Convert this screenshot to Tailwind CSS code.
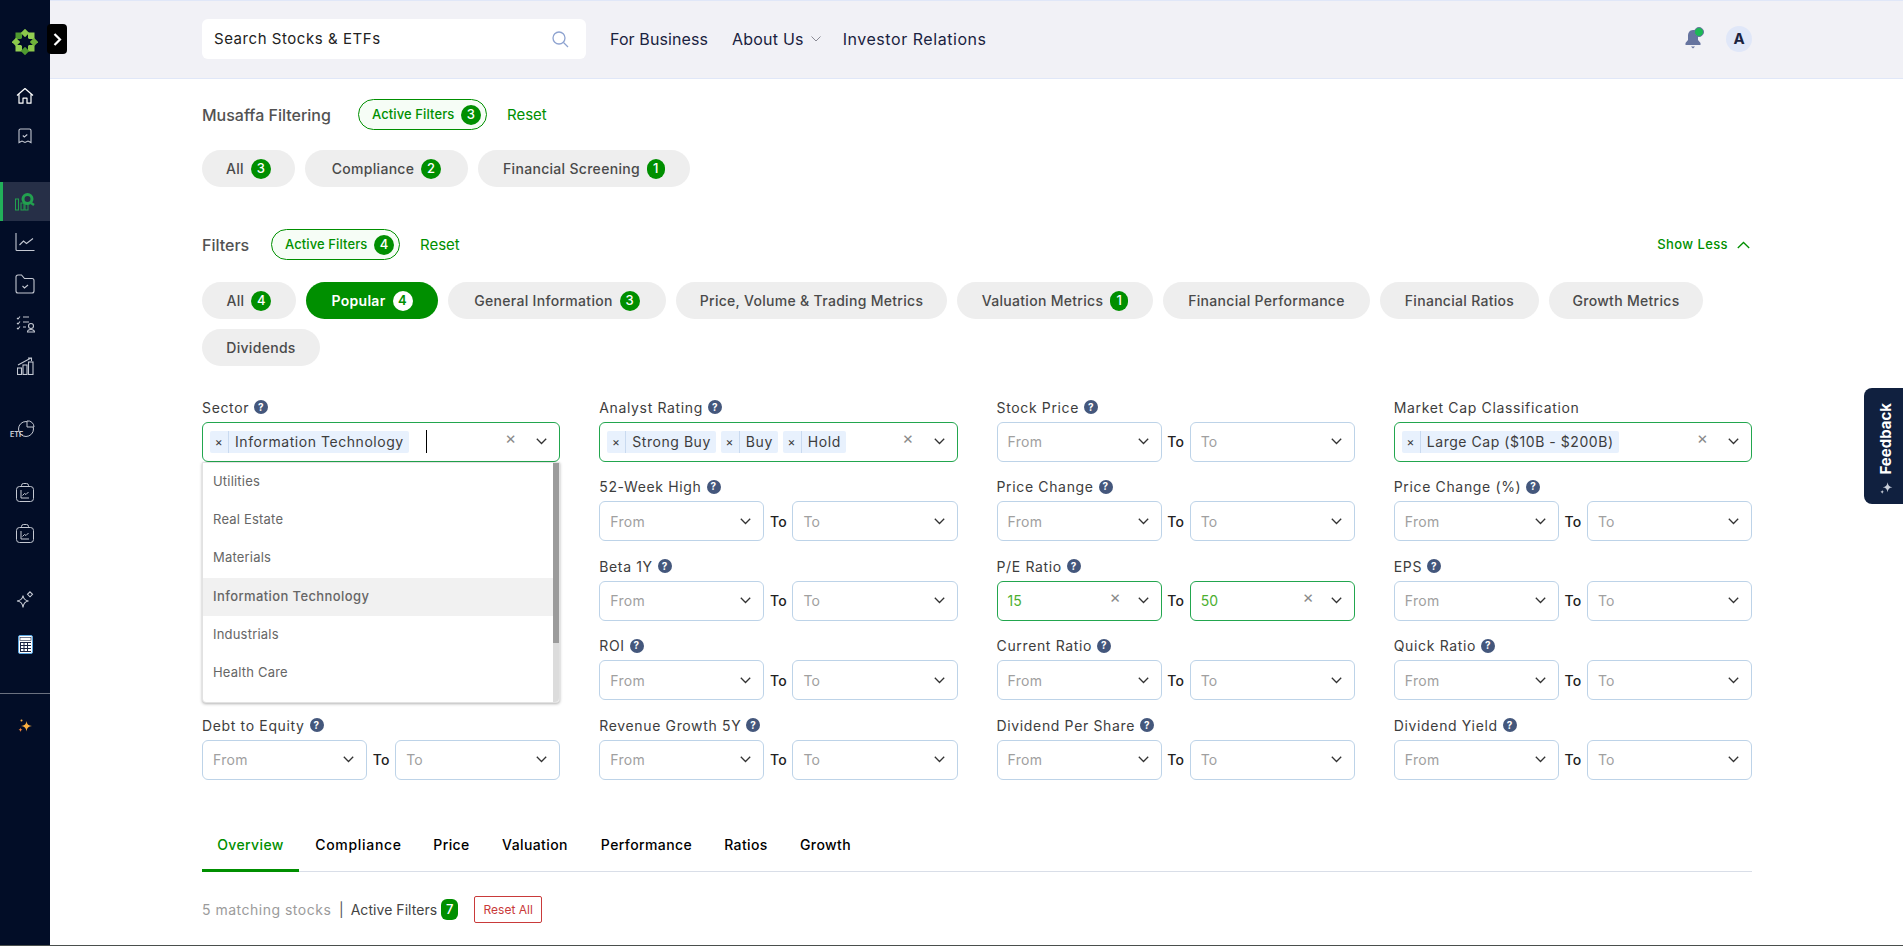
<!DOCTYPE html>
<html lang="en">
  <head>
    <meta charset="UTF-8" />
    <title>Stock Screener</title>
    <script src="https://cdn.jsdelivr.net/npm/@tailwindcss/browser@4"></script>
  </head>
  <body class="[font-family:Inter,sans-serif] bg-white h-[946px] overflow-hidden relative">
    <div class="flex h-[946px]">
      <!-- sidebar -->
      <aside class="w-[50px] shrink-0 bg-[#020d27] relative flex flex-col items-center text-[#c4c8d2]">
        <div class="h-[82px] pt-[1px] flex items-center justify-center w-full">
          <svg width="26" height="26" viewBox="0 0 26 26">
            <g fill="#7dbb3c">
              <rect x="3.500" y="3.500" width="6.500" height="6.500" fill="#4f9a2f" />
              <rect x="16" y="3.500" width="6.500" height="6.500" fill="#93cf52" />
              <rect x="3.500" y="16" width="6.500" height="6.500" fill="#93cf52" />
              <rect x="16" y="16" width="6.500" height="6.500" fill="#8cc84b" />
            </g>
            <g fill="#8cc84b">
              <rect x="10" y="1" width="6" height="6" transform="rotate(45 13 4)" />
              <rect x="10" y="19" width="6" height="6" transform="rotate(45 13 22)" fill="#4f9a2f" />
              <rect x="1" y="10" width="6" height="6" transform="rotate(45 4 13)" />
              <rect x="19" y="10" width="6" height="6" transform="rotate(45 22 13)" fill="#6fb23a" />
            </g>
            <circle cx="13" cy="13" r="5" fill="#020d27" />
          </svg>
        </div>
        <div class="h-[28px] flex items-center text-white">
          <svg width="18" height="18" viewBox="0 0 18 18" fill="none" stroke="currentColor" stroke-width="1.2"><path d="M1 8.500 9 1.500l8 7M3 7v9.200h4v-5h4v5h4V7" stroke-linejoin="round" /></svg>
        </div>
        <div class="h-[28px] mt-[12px] flex items-center">
          <svg width="14" height="16" viewBox="0 0 14 16" fill="none" stroke="currentColor" stroke-width="1.1"><path d="M2.500 1h9A1.500 1.500 0 0 1 13 2.500V14.500l-3-1.500-3 1.500L4 13l-3 1.500V2.500A1.500 1.500 0 0 1 2.500 1ZM4.800 7.500l1.500 1.500 3-2.500" /></svg>
        </div>
        <div class="mt-[32px] h-[39px] w-full bg-[#262f47] border-l-[3px] border-[#22b05a] flex items-center justify-center pr-[3px] text-[#22a04f]">
          <svg width="20" height="18" viewBox="0 0 20 18" fill="none" stroke="currentColor"><rect x="0.500" y="6" width="3" height="11" /><rect x="6" y="10" width="3" height="7" /><rect x="10" y="11" width="3" height="6" /><circle cx="12.500" cy="6" r="4.500" stroke-width="3" /><path d="m16 10 3 2" stroke-width="2.500" /></svg>
        </div>
        <div class="mt-[1px] h-[40px] flex items-center">
          <svg width="20" height="20" viewBox="0 0 20 20" fill="none" stroke="currentColor" stroke-width="1.100"><path d="M1 1v16.500a1 1 0 0 0 1 1h17.500" /><path d="m4.500 13 4-4 3 2.500L18 6.500" /></svg>
        </div>
        <div class="mt-[2px] h-[40px] flex items-center">
          <svg width="20" height="20" viewBox="0 0 20 20" fill="none" stroke="currentColor" stroke-width="1.100"><path d="M1 3a2 2 0 0 1 2-2h3.500l3 3.500H17a2 2 0 0 1 2 2V17a2 2 0 0 1-2 2H3a2 2 0 0 1-2-2ZM7.500 12l2 2 3.500-3" /></svg>
        </div>
        <div class="h-[40px] flex items-center">
          <svg width="19" height="18" viewBox="0 0 19 18" fill="none" stroke="currentColor" stroke-width="1.100"><path d="m1 3 1 1 2-2.500M1 8l1 1 2-2.500M1 13l1 1 2-2.500M7 2h6M7 7h6M7 12h3" /><circle cx="15" cy="11" r="2.500" /><path d="M11.500 17a3.500 2.500 0 0 1 7 0Z" /></svg>
        </div>
        <div class="mt-[2px] h-[40px] flex items-center">
          <svg width="17" height="18" viewBox="0 0 17 18" fill="none" stroke="currentColor" stroke-width="1.100"><rect x="0.500" y="11" width="4" height="6.500" /><rect x="6" y="8" width="4" height="9.500" /><rect x="11.500" y="5" width="4.500" height="12.500" /><path d="M1 8 14 1M11 1h3.500v3" /></svg>
        </div>
        <div class="mt-[22px] h-[40px] flex items-center relative">
          <svg width="20" height="17" viewBox="0 0 20 17" fill="none" stroke="currentColor" stroke-width="1"><circle cx="11" cy="9" r="7.500" /><path d="M12 1a6 6 0 0 1 7 6h-7Z" fill="#020d27" /></svg>
          <span class="absolute left-[-5px] bottom-[10px] text-[7px] font-bold leading-none">ETF</span>
        </div>
        <div class="mt-[24px] h-[40px] flex items-center">
          <svg width="18" height="19" viewBox="0 0 18 19" fill="none" stroke="currentColor" stroke-width="1"><rect x="0.500" y="3.500" width="17" height="15" rx="3" /><path d="M5.500 3.500V2.500a2 2 0 0 1 2-2h3a2 2 0 0 1 2 2v1M5 7v8h8M6.500 12.500l2-2 1.500 1 2.500-2.500" /></svg>
        </div>
        <div class="mt-[1px] h-[40px] flex items-center">
          <svg width="18" height="19" viewBox="0 0 18 19" fill="none" stroke="currentColor" stroke-width="1"><rect x="0.500" y="3.500" width="17" height="15" rx="3" /><path d="M5.500 3.500V2.500a2 2 0 0 1 2-2h3a2 2 0 0 1 2 2v1M5 7v8h8M6.500 12.500l2-2 1.500 1 2.500-2.500" /></svg>
        </div>
        <div class="mt-[27px] h-[40px] flex items-center">
          <svg width="18" height="18" viewBox="0 0 18 18" fill="none" stroke="currentColor" stroke-width="1.100"><path d="M7 4.500C7.500 8 9 9.500 12.500 10 9 10.500 7.500 12 7 16.500 6.500 12 5 10.500 1 10 5 9.500 6.500 8 7 4.500Z" /><path d="m14 .8 2.500 2.500L14 5.800l-2.500-2.500Z" /></svg>
        </div>
        <div class="mt-[4px] h-[40px] flex items-center">
          <svg width="15" height="19" viewBox="0 0 15 19"><rect x="0.500" y="0.500" width="14" height="18" rx="1.500" fill="#fff" stroke="#5aa6e0" /><rect x="2" y="2.500" width="11" height="3" fill="#fff" stroke="#1a2240" stroke-width=".6" /><g fill="#1a2240"><rect x="2" y="7" width="11" height="1" /><rect x="2" y="10" width="11" height="1" /><rect x="2" y="13" width="11" height="1" /><rect x="2" y="16" width="11" height="1" /><rect x="2" y="7" width="1" height="10" /><rect x="5.500" y="7" width="1" height="10" /><rect x="9" y="7" width="1" height="10" /></g></svg>
        </div>
        <div class="mt-[29px] w-full h-[1px] bg-[#6b7180]"></div>
        <div class="mt-[12px] h-[40px] flex items-center">
          <svg width="15" height="14" viewBox="0 0 15 14"><path d="M8.500 2C9 5.500 10.500 6.500 14 7 10.500 7.500 9 8.500 8.500 12.500 8 8.500 6.500 7.500 3 7 6.500 6.500 8 5.500 8.500 2Z" fill="#fbb040" /><path d="M2.500 8.500C2.700 10 3.200 10.500 4.500 10.700 3.200 11 2.700 11.500 2.500 13.200 2.300 11.500 1.800 11 .5 10.700 1.800 10.500 2.300 10 2.500 8.500Z" fill="#f0803c" /><circle cx="3.500" cy="1.500" r="1" fill="#fbb040" /></svg>
        </div>
        <button class="absolute left-[47px] top-[24px] w-[20px] h-[30px] bg-black rounded-[4px] flex items-center justify-center text-white z-20">
          <svg width="9" height="13" viewBox="0 0 9 13" fill="none" stroke="currentColor" stroke-width="2.200"><path d="m1.500 1 5.500 5.500L1.500 12" /></svg>
        </button>
      </aside>

      <div class="flex-1 min-w-0">
        <!-- top bar -->
        <header class="h-[79px] bg-[#f1f1f6] border-y border-[#e0e7f8] pl-[152px] pr-[150px] pb-[1px] flex items-center text-[#1a2240]">
          <div class="w-[384px] h-[40px] bg-white rounded-[6px] pl-3 pr-[17px] flex items-center justify-between text-[15px] tracking-[0.55px] text-[#222]">
            Search Stocks &amp; ETFs
            <svg width="17" height="17" viewBox="0 0 17 17" fill="none" stroke="#8ea3d0" stroke-width="1.300"><circle cx="7" cy="7" r="6" /><path d="m11.500 11.500 4.500 4.500" /></svg>
          </div>
          <a class="ml-6 text-[16px] tracking-[0.1px]">For Business</a>
          <a class="ml-6 text-[16px] tracking-[0.2px]">About Us</a>
          <svg class="ml-[7px]" width="10" height="6" viewBox="0 0 10 6" fill="none" stroke="#8a8a94"><path d="m.5.500 4.500 4.500L9.500.500" /></svg>
          <a class="ml-[22px] text-[16px] tracking-[0.55px]">Investor Relations</a>
          <div class="ml-auto flex items-center mr-[1px]">
            <div class="relative w-[18px] h-[22px] mr-[24px]">
              <svg width="18" height="22" viewBox="0 0 18 22" fill="#66749f"><path d="M9 2c-3.500 0-5 3-5 6v4l-2.500 3v2h15v-2L14 12V8c0-3.500-1.500-6-5-6ZM7 18.500h4L9 20.500Z" /></svg>
              <span class="absolute right-[-2px] top-[-1px] w-[8px] h-[8px] rounded-full bg-[#1cb955] border border-[#66749f] box-content"></span>
            </div>
            <div class="w-[26px] h-[26px] rounded-full bg-[#e0e7f8] flex items-center justify-center text-[15px] font-bold">A</div>
          </div>
        </header>

        <main class="pl-[152px] pr-[151px]">
          <div class="flex items-center mt-5 h-[31px]">
            <h2 class="w-[135px] whitespace-nowrap text-[16px] font-medium text-[#525252]">Musaffa Filtering</h2>
            <div class="ml-[21px] w-[129px] h-[31px] rounded-full border border-[#008f00] bg-[#f6fdf6] pl-[13px] pr-[5px] flex items-center justify-between text-[13px] tracking-[0.1px] font-medium text-[#008f00]">
              Active Filters
              <span class="w-[20px] h-[20px] rounded-full bg-[#008f00] text-white text-[13px] flex items-center justify-center">3</span>
            </div>
            <button class="ml-5 mt-[1px] text-[15px] text-[#008f00]">Reset</button>
          </div>

          <div class="flex gap-[10px] mt-5">
            <div class="h-[37px] w-[93px] rounded-full bg-[#eeeeee] flex items-center justify-center gap-[7px] text-[14px] tracking-[0.3px] font-medium text-[#4a4a4a]">All <span class="w-[20px] h-[20px] rounded-full bg-[#008f00] text-white text-[13px] flex items-center justify-center">3</span></div>
            <div class="h-[37px] w-[163px] rounded-full bg-[#eeeeee] flex items-center justify-center gap-[7px] text-[14px] tracking-[0.3px] font-medium text-[#4a4a4a]">Compliance <span class="w-[20px] h-[20px] rounded-full bg-[#008f00] text-white text-[13px] flex items-center justify-center">2</span></div>
            <div class="h-[37px] w-[212px] rounded-full bg-[#eeeeee] flex items-center justify-center gap-[7px] text-[14px] tracking-[0.3px] font-medium text-[#4a4a4a]">Financial Screening <span class="w-[18px] h-[20px] rounded-full bg-[#008f00] text-white text-[13px] flex items-center justify-center">1</span></div>
          </div>

          <div class="flex items-center mt-[42px] h-[31px]">
            <h2 class="w-[48px] text-[16px] font-medium text-[#525252]">Filters</h2>
            <div class="ml-[21px] w-[129px] h-[31px] rounded-full border border-[#008f00] bg-[#f6fdf6] pl-[13px] pr-[5px] flex items-center justify-between text-[13px] tracking-[0.1px] font-medium text-[#008f00]">
              Active Filters
              <span class="w-[20px] h-[20px] rounded-full bg-[#008f00] text-white text-[13px] flex items-center justify-center">4</span>
            </div>
            <button class="ml-5 mt-[1px] text-[15px] text-[#008f00]">Reset</button>
            <button class="ml-auto flex items-center text-[13px] tracking-[0.4px] font-medium text-[#008f00]">
              Show Less
              <svg class="ml-[9px] mr-[2px]" width="13" height="8" viewBox="0 0 13 8" fill="none" stroke="currentColor" stroke-width="1.300"><path d="m.8 7 5.700-5.500L12.200 7" /></svg>
            </button>
          </div>

          <div class="flex flex-wrap gap-[10px] mt-[22px]">
            <div class="h-[37px] w-[94px] rounded-full bg-[#eeeeee] flex items-center justify-center gap-[7px] text-[14px] tracking-[0.3px] font-medium text-[#4a4a4a]">All <span class="w-[20px] h-[20px] rounded-full bg-[#008f00] text-white text-[13px] flex items-center justify-center">4</span></div>
            <div class="h-[37px] w-[132px] rounded-full bg-[#008f00] flex items-center justify-center gap-[7px] text-[14px] tracking-[0.3px] font-semibold text-white">Popular <span class="w-[20px] h-[20px] rounded-full bg-white text-[#008f00] text-[13px] flex items-center justify-center">4</span></div>
            <div class="h-[37px] w-[218px] rounded-full bg-[#eeeeee] flex items-center justify-center gap-[7px] text-[14px] tracking-[0.3px] font-medium text-[#4a4a4a]">General Information <span class="w-[20px] h-[20px] rounded-full bg-[#008f00] text-white text-[13px] flex items-center justify-center">3</span></div>
            <div class="h-[37px] w-[271px] rounded-full bg-[#eeeeee] flex items-center justify-center text-[14px] tracking-[0.3px] font-medium text-[#4a4a4a]">Price, Volume &amp; Trading Metrics</div>
            <div class="h-[37px] w-[196px] rounded-full bg-[#eeeeee] flex items-center justify-center gap-[7px] text-[14px] tracking-[0.3px] font-medium text-[#4a4a4a]">Valuation Metrics <span class="w-[18px] h-[20px] rounded-full bg-[#008f00] text-white text-[13px] flex items-center justify-center">1</span></div>
            <div class="h-[37px] w-[207px] rounded-full bg-[#eeeeee] flex items-center justify-center text-[14px] tracking-[0.3px] font-medium text-[#4a4a4a]">Financial Performance</div>
            <div class="h-[37px] w-[159px] rounded-full bg-[#eeeeee] flex items-center justify-center text-[14px] tracking-[0.3px] font-medium text-[#4a4a4a]">Financial Ratios</div>
            <div class="h-[37px] w-[154px] rounded-full bg-[#eeeeee] flex items-center justify-center text-[14px] tracking-[0.3px] font-medium text-[#4a4a4a]">Growth Metrics</div>
            <div class="h-[37px] w-[118px] rounded-full bg-[#eeeeee] flex items-center justify-center text-[14px] tracking-[0.3px] font-medium text-[#4a4a4a]">Dividends</div>
          </div>

          <!-- filter grid, filled by the script below -->
          <div id="filterGrid" class="grid grid-cols-4 gap-x-[39px] gap-y-[14.5px] mt-[30.5px]"></div>

          <!-- tabs -->
          <div class="flex mt-[44.5px] h-[48px] border-b border-[#d9dee8] text-[14px] font-medium text-black tracking-[0.4px] text-center">
            <div class="w-[97px] pt-[10px] h-[48px] border-b-[3px] border-[#008f00] text-[#008f00]">Overview</div>
            <div class="w-[119px] pt-[10px] tracking-[0.7px]">Compliance</div>
            <div class="w-[67px] pt-[10px]">Price</div>
            <div class="w-[100px] pt-[10px]">Valuation</div>
            <div class="w-[123px] pt-[10px]">Performance</div>
            <div class="w-[76px] pt-[10px]">Ratios</div>
            <div class="w-[83px] pt-[10px]">Growth</div>
          </div>

          <div class="flex items-center mt-6 h-[27px] text-[14px]">
            <span class="text-[#9b9b9b] w-[129px] tracking-[0.5px] whitespace-nowrap">5 matching stocks</span>
            <span class="ml-[8px] text-[#555]">|</span>
            <span class="ml-[7px] text-[#444] tracking-[0.05px]">Active Filters</span>
            <span class="ml-[4px] w-[17px] h-[21px] rounded-[6px] bg-[#008f00] text-white text-[13px] font-medium flex items-center justify-center">7</span>
            <button class="ml-[16px] w-[68px] h-[27px] border border-[#c93a3a] rounded-[2px] text-[12px] text-[#c93a3a]">Reset All</button>
          </div>
        </main>
      </div>
    </div>

    <div class="absolute left-0 right-0 bottom-0 h-[1px] bg-[#4a4f4d]"></div>

    <!-- feedback tab -->
    <div class="absolute right-0 top-[388px] w-[39px] h-[116px] bg-[#10203f] rounded-l-[8px] pl-[5px] flex flex-col items-center justify-end pb-[9px] text-white">
      <span class="[writing-mode:vertical-rl] rotate-180 text-[15px] font-bold">Feedback</span>
      <svg class="mt-[5px]" width="15" height="15" viewBox="0 0 14 14" fill="#c9cfda"><path d="M8 2c.4 3 1.500 4.200 4.500 4.700C9.500 7.200 8.400 8.500 8 11.500 7.600 8.500 6.500 7.200 3.500 6.700 6.500 6.200 7.600 5 8 2Z" /><path d="M3 9c.2 1.300.7 1.800 2 2-1.300.2-1.800.7-2 2-.2-1.300-.7-1.800-2-2 1.300-.2 1.800-.7 2-2Z" /></svg>
    </div>

    <script>
      const helpIcon = `<span class="w-[14px] h-[14px] rounded-full bg-[#44577c] text-white text-[10px] font-bold flex items-center justify-center">?</span>`;
      const chevron = `<svg class="shrink-0" width="11" height="7" viewBox="0 0 11 7" fill="none" stroke="#333" stroke-width="1.300"><path d="m.8.800 4.700 4.700L10.200.800" /></svg>`;
      const clearX = `<span class="text-[17px] leading-none text-[#8a8a8a] mt-[-6px]">×</span>`;

      const plainLabel = (text) =>
        `<div class="h-[21px] mb-[4px] flex items-center gap-[5px] text-[14px] text-[#3d3d3d] tracking-[0.65px] whitespace-nowrap">${text}</div>`;
      const fieldLabel = (text) => plainLabel(`<span>${text}</span> ${helpIcon}`);

      const rangeBox = (placeholder, value) => {
        if (value) {
          return `<div class="flex-1 h-[40px] rounded-[6px] border border-[#22a64e] pl-[10px] pr-[12px] flex items-center text-[14px] text-[#4caf30]"><span class="flex-1">${value}</span>${clearX}<span class="w-[17px]"></span>${chevron}</div>`;
        }
        return `<div class="flex-1 h-[40px] rounded-[6px] border border-[#bdd3e8] pl-[10px] pr-[12px] flex items-center justify-between text-[14px] tracking-[0.3px] text-[#a0a0a0]">${placeholder}${chevron}</div>`;
      };

      const rangeField = (label, from, to) => `<div>
          ${fieldLabel(label)}
          <div class="flex items-center">
            ${rangeBox("From", from)}
            <span class="w-[28px] shrink-0 text-center text-[14px] font-medium text-[#222]">To</span>
            ${rangeBox("To", to)}
          </div>
        </div>`;

      const chip = (text) =>
        `<span class="h-[22px] flex items-center bg-[#e8f1fd] rounded-[2px] text-[14px] text-[#3d3d3d] tracking-[0.55px] whitespace-nowrap"><span class="w-[19px] h-[22px] flex items-center justify-center border-r border-[#c9daf0] text-[12px]">×</span><span class="pl-[6px] pr-[5px]">${text}</span></span>`;

      const sectorOptions = ["Utilities", "Real Estate", "Materials", "Information Technology", "Industrials", "Health Care"];
      const sectorMenu = `<div class="absolute z-10 left-0 right-0 top-[65px] h-[241px] bg-white rounded-b-[4px] border border-[#e2e2e2] shadow-[0_1px_3px_rgba(0,0,0,0.3)] text-[13px] tracking-[0.2px] text-[#666]">
          ${sectorOptions
            .map((o) =>
              o === "Information Technology"
                ? `<div class="h-[38px] mt-[1px] pl-[10px] pr-[7px] flex items-center font-medium tracking-[0.4px] bg-[#f1f1f1] w-[352px]">${o}</div>`
                : `<div class="h-[38px] pl-[10px] flex items-center">${o}</div>`
            )
            .join("")}
          <div class="absolute right-0 top-0 bottom-0 w-[6px] bg-[#dcdcdc] rounded-br-[4px]"><div class="h-[180px] bg-[#9b9b9b]"></div></div>
        </div>`;

      const multiField = (label, chips, extra = "", menu = "") => `<div class="relative">
          ${label}
          <div class="h-[40px] rounded-[6px] border border-[#22a64e] pl-[7px] pr-[12px] flex items-center gap-[5px]">
            ${chips.map(chip).join("")}
            ${extra}
            <span class="ml-auto"></span>${clearX}<span class="w-[10px]"></span>${chevron}
          </div>
          ${menu}
        </div>`;

      const cursor = `<span class="ml-[12px] w-[1px] h-[23px] bg-black"></span>`;

      const cells = [
        multiField(fieldLabel("Sector"), ["Information Technology"], cursor, sectorMenu),
        multiField(fieldLabel("Analyst Rating"), ["Strong Buy", "Buy", "Hold"]),
        rangeField("Stock Price"),
        multiField(plainLabel("Market Cap Classification"), ["Large Cap ($10B - $200B)"]),
        `<div></div>`,
        rangeField("52-Week High"),
        rangeField("Price Change"),
        rangeField("Price Change (%)"),
        `<div></div>`,
        rangeField("Beta 1Y"),
        rangeField("P/E Ratio", "15", "50"),
        rangeField("EPS"),
        `<div></div>`,
        rangeField("ROI"),
        rangeField("Current Ratio"),
        rangeField("Quick Ratio"),
        rangeField("Debt to Equity"),
        rangeField("Revenue Growth 5Y"),
        rangeField("Dividend Per Share"),
        rangeField("Dividend Yield"),
      ];
      document.getElementById("filterGrid").innerHTML = cells.join("");
    </script>
  </body>
</html>
